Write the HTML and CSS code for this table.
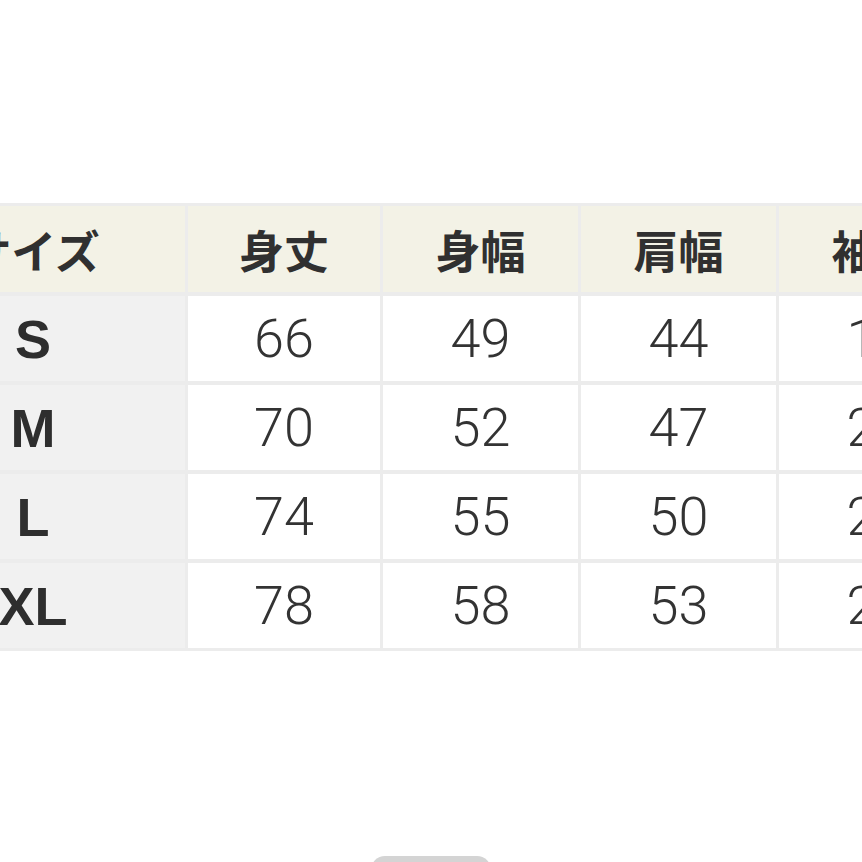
FILE: index.html
```html
<!DOCTYPE html>
<html lang="ja">
<head>
<meta charset="utf-8">
<title>サイズ表</title>
<link rel="stylesheet" href="styles.css">
</head>
<body>
<div class="page">
  <div class="size-table">
    <div class="cell head">サイズ</div>
    <div class="cell head">身丈</div>
    <div class="cell head">身幅</div>
    <div class="cell head">肩幅</div>
    <div class="cell head">袖丈</div>

    <div class="cell label">S</div>
    <div class="cell num">66</div>
    <div class="cell num">49</div>
    <div class="cell num">44</div>
    <div class="cell num">19</div>

    <div class="cell label">M</div>
    <div class="cell num">70</div>
    <div class="cell num">52</div>
    <div class="cell num">47</div>
    <div class="cell num">20</div>

    <div class="cell label">L</div>
    <div class="cell num">74</div>
    <div class="cell num">55</div>
    <div class="cell num">50</div>
    <div class="cell num">21</div>

    <div class="cell label">XL</div>
    <div class="cell num">78</div>
    <div class="cell num">58</div>
    <div class="cell num">53</div>
    <div class="cell num">22</div>
  </div>
  <div class="pill"></div>
</div>
</body>
</html>
```
FILE: styles.css
```css
html, body {
  margin: 0;
  padding: 0;
  background: #ffffff;
}
body {
  width: 862px;
  height: 862px;
  overflow: hidden;
}
.page {
  padding-top: 203px;
  display: flex;
  flex-direction: column;
}
.size-table {
  margin-left: -122px;
  display: grid;
  grid-template-columns: 304px 192px 195px 195px 195px;
  grid-template-rows: 86px 85px 85px 85px 85px;
  column-gap: 3px;
  row-gap: 4px;
  padding: 3px;
  background: #ececec;
  width: max-content;
}
.cell {
  display: flex;
  align-items: center;
  justify-content: center;
  color: #333333;
  background: #ffffff;
  white-space: nowrap;
}
.head {
  background: #f3f2e6;
  font-family: "Noto Sans CJK JP", sans-serif;
  font-weight: 700;
  font-size: 45px;
  color: #303030;
}
.label {
  background: #f1f1f1;
  font-family: "Liberation Sans", Arial, sans-serif;
  font-weight: 700;
  font-size: 54px;
  color: #2e2e2e;
}
.num {
  font-family: Roboto, "Liberation Sans", sans-serif;
  font-weight: 300;
  font-size: 54px;
  color: #333333;
}
.pill {
  align-self: center;
  margin-top: 205px;
  width: 120px;
  height: 30px;
  border-radius: 14px;
  background: #d4d4d4;
}
```
